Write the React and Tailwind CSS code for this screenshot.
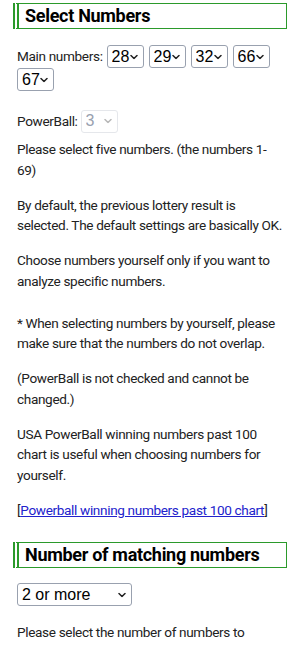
import { useState } from 'react';

const nums = Array.from({ length: 69 }, (_, i) => i + 1);

function Chevron({ disabled, className }) {
  return (
    <svg
      viewBox="0 0 8 5"
      className={'pointer-events-none absolute top-1/2 h-[5px] w-[8px] -translate-y-1/2 ' + className}
      fill="none"
      stroke={disabled ? '#b8b8b8' : '#222'}
      strokeWidth="1.5"
      strokeLinecap="round"
      strokeLinejoin="round"
    >
      <path d="M1 1 L4 4 L7 1" />
    </svg>
  );
}

function NumSelect({ value, onChange, disabled }) {
  return (
    <span className="relative inline-flex">
      <select
        value={value}
        disabled={disabled}
        onChange={(e) => onChange(Number(e.target.value))}
        className={
          'h-[23px] w-[37px] appearance-none rounded-[3px] border pl-[4px] pr-0 text-[16px] leading-none tracking-normal ' +
          (disabled ? 'border-gray-200 bg-white text-gray-400' : 'border-gray-400 bg-white text-black')
        }
        style={{ fontFamily: '"Liberation Sans", Arial, sans-serif' }}
      >
        {nums.map((n) => (
          <option key={n} value={n}>{n}</option>
        ))}
      </select>
      <Chevron disabled={disabled} className="right-[6px]" />
    </span>
  );
}

function Heading({ children }) {
  return (
    <h2 className="mx-[13px] border border-l-[6px] border-[#2b9a2b] py-[2px] pl-[6px] text-[18px] font-bold leading-[20px] tracking-[-0.3px] text-black" style={{ borderLeftStyle: 'double' }}>
      {children}
    </h2>
  );
}

export default function App() {
  const [main, setMain] = useState([28, 29, 32, 66, 67]);
  const [match, setMatch] = useState('2');

  return (
    <div className="bg-white pt-[3px] text-[13.6px] leading-[20.5px] tracking-[-0.35px] text-[#222]" style={{ fontFamily: 'Roboto, "Noto Sans", sans-serif' }}>
      <Heading>Select Numbers</Heading>

      <div className="flex flex-col gap-[14.5px] px-[17px] pt-[16px]">
        <div className="flex flex-wrap items-center gap-x-[5px] gap-y-[0px]">
          <span className="mr-[-1px]">Main numbers:</span>
          {main.map((v, i) => (
            <NumSelect
              key={i}
              value={v}
              onChange={(n) => setMain(main.map((m, j) => (j === i ? n : m)))}
            />
          ))}
        </div>

        <div className="mb-[-8px] flex items-center gap-[3px] pt-[4px]">
          <span>PowerBall:</span>
          <NumSelect value={3} disabled onChange={() => {}} />
        </div>

        <p>Please select five numbers. (the numbers 1-69)</p>
        <p>By default, the previous lottery result is selected. The default settings are basically OK.</p>
        <p>Choose numbers yourself only if you want to analyze specific numbers.</p>
        <p className="pt-[7px]">* When selecting numbers by yourself, please make sure that the numbers do not overlap.</p>
        <p>(PowerBall is not checked and cannot be changed.)</p>
        <p>USA PowerBall winning numbers past 100 chart is useful when choosing numbers for yourself.</p>
        <p>
          [<a href="#" className="text-[#2222cc] underline">Powerball winning numbers past 100 chart</a>]
        </p>
      </div>

      <div className="pt-[22px]">
        <Heading>Number of matching numbers</Heading>
      </div>

      <div className="flex flex-col gap-[16px] px-[17px] pt-[15px]">
        <div className="relative inline-flex w-[115px]">
          <select
            value={match}
            onChange={(e) => setMatch(e.target.value)}
            className="h-[23px] w-[115px] appearance-none rounded-[3px] border border-gray-400 bg-white px-[4px] text-[16px] leading-none tracking-normal text-black"
            style={{ fontFamily: '"Liberation Sans", Arial, sans-serif' }}
          >
            <option value="2">2 or more</option>
            <option value="3">3 or more</option>
            <option value="4">4 or more</option>
            <option value="5">5</option>
          </select>
          <Chevron className="right-[6px]" />
        </div>
        <p>Please select the number of numbers to match.</p>
      </div>
    </div>
  );
}
